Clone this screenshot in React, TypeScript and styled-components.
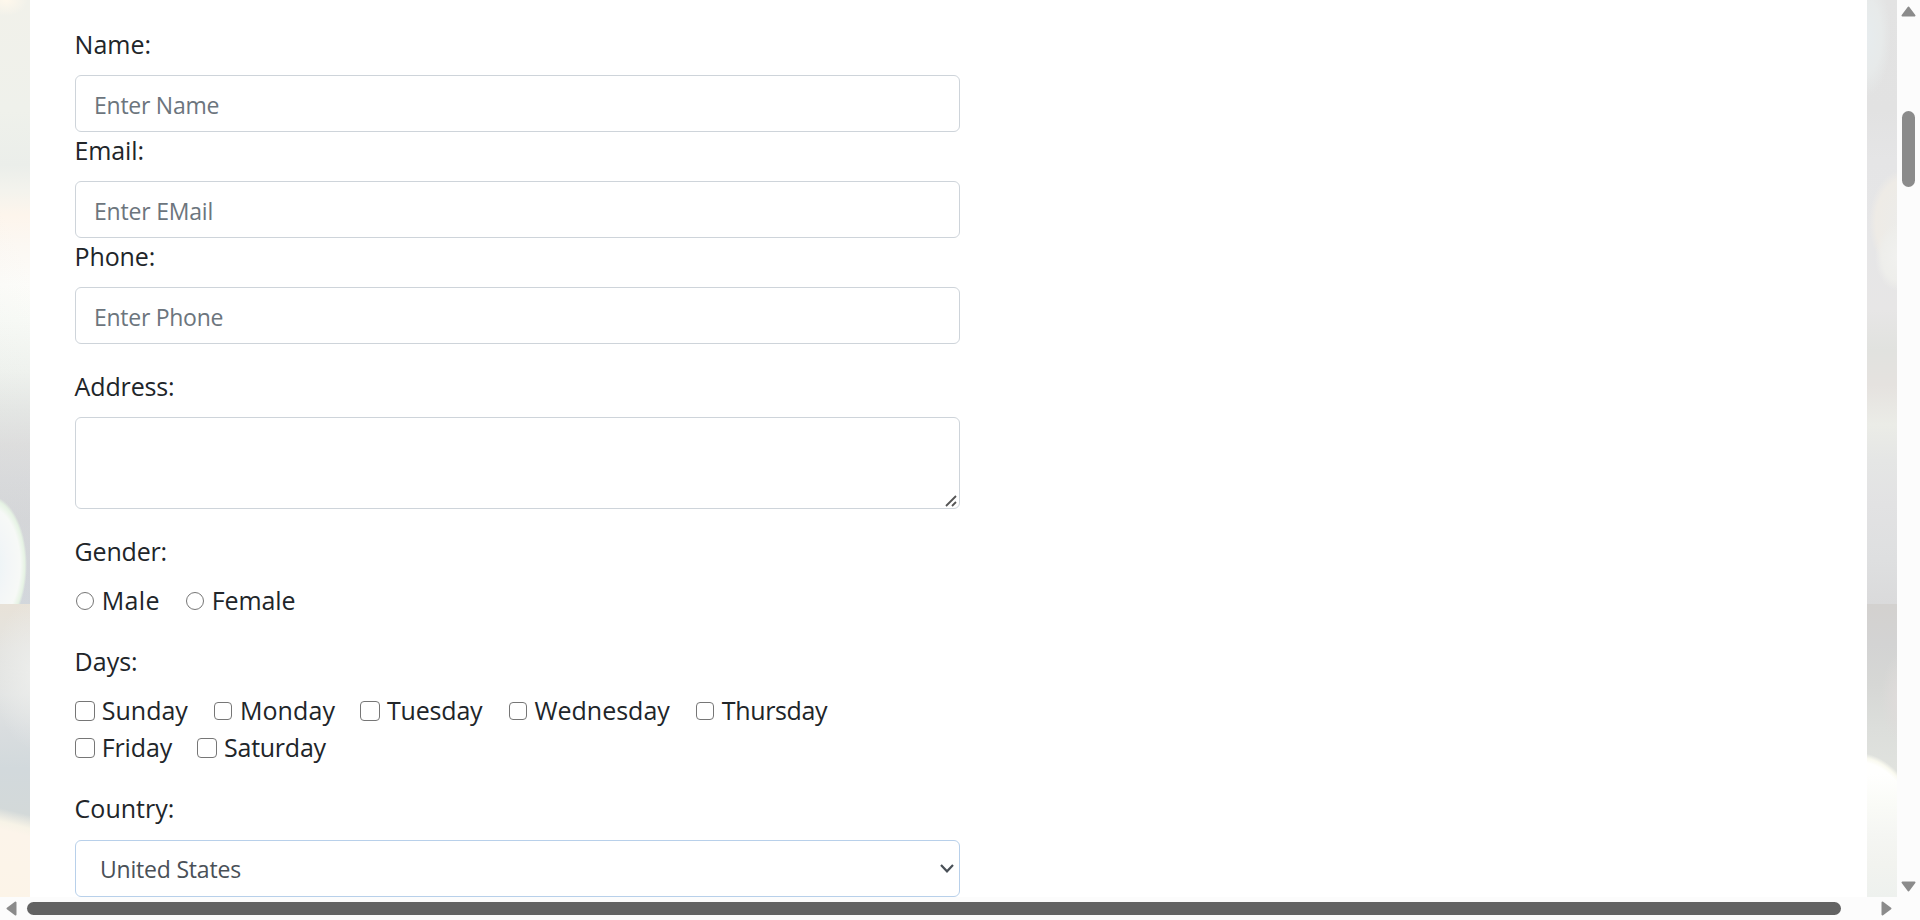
import React from "react";
import styled, { createGlobalStyle, css } from "styled-components";

const GlobalStyle = createGlobalStyle`
  *, *::before, *::after { box-sizing: border-box; }
  body {
    margin: 0;
    overflow: hidden;
    background: #fcfcfc;
    color: #212529;
    font-family: "Segoe UI", "Open Sans", "Noto Sans", sans-serif;
  }
`;

const Window = styled.div`
  display: grid;
  grid-template-columns: 1897px 23px;
  grid-template-rows: 897px 23px;
  width: 1920px;
  height: 920px;
  overflow: hidden;
`;

const Viewport = styled.div`
  display: grid;
  grid-template-columns: 30px 1837px 30px;
  overflow: hidden;
`;

const Backdrop = styled.div`
  display: grid;
  grid-template-rows: 604px 293px;
`;

const LeftUpper = styled.div`
  background:
    radial-gradient(ellipse 38px 70px at -11px 565px, #e9f3f6 0, #f3f6f7 50%, #f7f9f7 82%, #e6f3e4 94%, rgba(220, 232, 220, 0) 100%),
    radial-gradient(ellipse 22px 16px at 6px 0, #fff8ec 0, rgba(255, 248, 236, 0) 100%),
    linear-gradient(65deg, rgba(205, 212, 208, 0.12) 0, rgba(255, 255, 255, 0) 60%),
    linear-gradient(#f1f1ea 0, #eff1eb 110px, #ebeeea 165px, #f3f3ed 190px, #fdf5ec 215px, #fcf8f3 245px, #fcfcf9 285px, #f8faf6 320px, #f0f3ef 370px, #e5e7e5 410px, #dedede 445px, #d9dadc 480px, #d5d6d9 520px, #d3d7dd 604px);
`;

const LeftLower = styled.div`
  background:
    linear-gradient(194deg, rgba(235, 236, 229, 0) 205px, #f7f3e7 218px, #fcf4ea 226px, #fcf4e8 293px),
    radial-gradient(ellipse 40px 75px at 34px 70px, rgba(239, 240, 238, 0.8) 0, rgba(233, 234, 230, 0) 100%),
    linear-gradient(#e8e2d8 0, #e4e4e1 45px, #e2e4e3 90px, #d9dddf 125px, #d2d9dc 165px, #d3d9d9 210px, #e8e6dc 293px);
`;

const RightUpper = styled.div`
  background:
    radial-gradient(ellipse 24px 34px at 32px 257px, #f1f1ef 0, #eeeeeb 70%, rgba(235, 235, 233, 0) 100%),
    radial-gradient(ellipse 34px 52px at 36px 222px, #ececea 0, #eeebe6 80%, rgba(233, 233, 233, 0) 100%),
    radial-gradient(ellipse 24px 60px at 0 36px, #e7ecee 0, #e7eaea 60%, rgba(230, 230, 230, 0) 100%),
    linear-gradient(#e3e3e3 0, #e2e2e2 110px, #e5e5e6 160px, #e6e6e7 240px, #e7e6e6 310px, #e1e2df 350px, #e5e2df 385px, #ebece7 425px, #e5e6e5 460px, #e2e2e3 505px, #dedfe0 560px, #dadadb 604px);
`;

const RightLower = styled.div`
  background:
    linear-gradient(to bottom, rgba(250, 251, 247, 0) 170px, #fafbf7 200px, #f5f6f3 230px, #f2f3ef 260px, #eef1ee 293px),
    radial-gradient(ellipse 80px 154px at -8px 303px, #ffffff 0, #fffffe 94%, #fafaf0 97%, rgba(228, 228, 218, 0) 100%),
    radial-gradient(ellipse 18px 45px at 32px 95px, #dfdbda 0, rgba(220, 218, 216, 0) 100%),
    linear-gradient(#d3d1cf 0, #d3d3d3 40px, #d6d7d5 80px, #dcdedb 125px, #e0e2de 165px, #e5e5df 293px);
`;

const Page = styled.main`
  background: #fff;
  padding: 26px 45px 0;
`;

const Form = styled.form`
  width: 885px;
`;

const Group = styled.div`
  margin-bottom: 24px;
`;

const Caption = styled.label<{ $track?: number }>`
  display: block;
  margin: 0 0 12px;
  text-indent: -0.4px;
  font-size: 25px;
  line-height: 37px;
  letter-spacing: ${(p) => p.$track ?? 0}px;
`;

const control = css`
  display: block;
  width: 100%;
  border: 1px solid #ced4da;
  border-radius: 6px;
  background: #fff;
  font-family: inherit;
  font-size: 23px;
  outline: none;
`;

const TextInput = styled.input<{ $track: number }>`
  ${control}
  height: 57px;
  padding: 3px 18px 0;
  letter-spacing: ${(p) => p.$track}px;
  &::placeholder { color: #6c757d; opacity: 1; }
`;

const AddressBox = styled.div`
  ${control}
  display: flex;
  align-items: flex-end;
  justify-content: flex-end;
  height: 92px;
  padding: 0 2px 1px 0;
`;

const SelectBox = styled.div`
  ${control}
  display: flex;
  align-items: center;
  justify-content: space-between;
  height: 57px;
  margin-top: 13px;
  padding: 0 5px 0 24px;
  border-color: #b8d0ea;
  color: #495057;
  letter-spacing: -0.2px;
`;

const Choices = styled.div`
  display: flex;
  flex-wrap: wrap;
  column-gap: 25.2px;
  max-width: 800px;
`;

const Choice = styled.label<{ $track: number }>`
  display: grid;
  grid-template-columns: 26.8px auto;
  align-items: center;
  font-size: 25px;
  line-height: 37px;
  letter-spacing: ${(p) => p.$track}px;
`;

const Tick = styled.input<{ $size: number }>`
  appearance: none;
  width: ${(p) => p.$size}px;
  height: ${(p) => p.$size}px;
  margin: 0 0 0 ${(p) => (20 - p.$size) / 2}px;
  border: 1.5px solid #767676;
  border-radius: ${(p) => (p.type === "radio" ? "50%" : "4px")};
  background: #fff;
`;

const VerticalBar = styled.div`
  display: flex;
  flex-direction: column;
  align-items: center;
  justify-content: space-between;
  padding: 6px 0 5px;
`;

const HorizontalBar = styled.div`
  display: flex;
  align-items: center;
  padding: 0 5px 0 6px;
`;

const VerticalTrack = styled.div`
  flex: 1;
  padding-top: 94px;
`;

const VerticalThumb = styled.div`
  width: 13px;
  height: 76px;
  border-radius: 7px;
  background: #8b8b8b;
`;

const HorizontalTrack = styled.div`
  flex: 1;
  padding-left: 10px;
`;

const HorizontalThumb = styled.div`
  width: 1814px;
  height: 13px;
  border-radius: 7px;
  background: #636363;
`;

const arrows = {
  up: { w: 15, h: 11, d: "M7.5 1.5 13.5 9.5H1.5Z" },
  down: { w: 15, h: 11, d: "M7.5 9.5 1.5 1.5H13.5Z" },
  left: { w: 11, h: 15, d: "M1.5 7.5 9.5 1.5V13.5Z" },
  right: { w: 11, h: 15, d: "M9.5 7.5 1.5 13.5V1.5Z" },
};

function Arrow({ to }: { to: keyof typeof arrows }) {
  const { w, h, d } = arrows[to];
  return (
    <svg width={w} height={h} viewBox={`0 0 ${w} ${h}`} aria-hidden="true">
      <path d={d} fill="#8b8b8b" stroke="#8b8b8b" strokeWidth="2" strokeLinejoin="round" />
    </svg>
  );
}

const fields = [
  { id: "name", label: "Name:", labelTrack: 0, hint: "Enter Name", hintTrack: -0.25 },
  { id: "email", label: "Email:", labelTrack: -0.15, hint: "Enter EMail", hintTrack: -0.2 },
  { id: "phone", label: "Phone:", labelTrack: -0.15, hint: "Enter Phone", hintTrack: -0.28 },
];

const genders = [
  { name: "Male", track: 0.3 },
  { name: "Female", track: -0.1 },
];

const days = [
  { name: "Sunday", size: 20, track: 0 },
  { name: "Monday", size: 18, track: 0.1 },
  { name: "Tuesday", size: 20, track: -0.2 },
  { name: "Wednesday", size: 18, track: 0 },
  { name: "Thursday", size: 18, track: -0.35 },
  { name: "Friday", size: 20, track: -0.15 },
  { name: "Saturday", size: 20, track: -0.25 },
];

export default function App() {
  return (
    <>
      <GlobalStyle />
      <Window>
        <Viewport>
          <Backdrop>
            <LeftUpper />
            <LeftLower />
          </Backdrop>
          <Page>
            <Form>
              <Group>
                {fields.map((f) => (
                  <React.Fragment key={f.id}>
                    <Caption htmlFor={f.id} $track={f.labelTrack}>{f.label}</Caption>
                    <TextInput id={f.id} placeholder={f.hint} $track={f.hintTrack} />
                  </React.Fragment>
                ))}
              </Group>
              <Group>
                <Caption $track={-0.15}>Address:</Caption>
                <AddressBox>
                  <svg width="12" height="12" viewBox="0 0 12 12" aria-hidden="true">
                    <path d="M1 11 11 1M7 11 11 7" stroke="#555" strokeWidth="1.8" fill="none" />
                  </svg>
                </AddressBox>
              </Group>
              <Group>
                <Caption $track={-0.2}>Gender:</Caption>
                <Choices>
                  {genders.map((g) => (
                    <Choice key={g.name} $track={g.track}>
                      <Tick type="radio" name="gender" $size={18} />
                      {g.name}
                    </Choice>
                  ))}
                </Choices>
              </Group>
              <Group>
                <Caption>Days:</Caption>
                <Choices>
                  {days.map((d) => (
                    <Choice key={d.name} $track={d.track}>
                      <Tick type="checkbox" $size={d.size} />
                      {d.name}
                    </Choice>
                  ))}
                </Choices>
              </Group>
              <Caption>Country:</Caption>
              <SelectBox>
                <span>United States</span>
                <svg width="14" height="10" viewBox="0 0 14 10" aria-hidden="true">
                  <path d="M1 1 7 7.3 13 1" stroke="#495057" strokeWidth="2.2" fill="none" />
                </svg>
              </SelectBox>
            </Form>
          </Page>
          <Backdrop>
            <RightUpper />
            <RightLower />
          </Backdrop>
        </Viewport>
        <VerticalBar>
          <Arrow to="up" />
          <VerticalTrack>
            <VerticalThumb />
          </VerticalTrack>
          <Arrow to="down" />
        </VerticalBar>
        <HorizontalBar>
          <Arrow to="left" />
          <HorizontalTrack>
            <HorizontalThumb />
          </HorizontalTrack>
          <Arrow to="right" />
        </HorizontalBar>
      </Window>
    </>
  );
}
